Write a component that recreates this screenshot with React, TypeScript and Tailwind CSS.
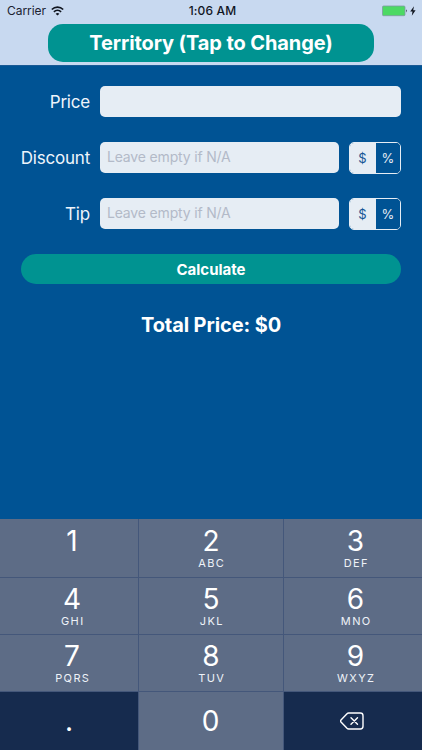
import React from 'react';

const KEYS = [
  { digit: '1', letters: '' },
  { digit: '2', letters: 'ABC' },
  { digit: '3', letters: 'DEF' },
  { digit: '4', letters: 'GHI' },
  { digit: '5', letters: 'JKL' },
  { digit: '6', letters: 'MNO' },
  { digit: '7', letters: 'PQRS' },
  { digit: '8', letters: 'TUV' },
  { digit: '9', letters: 'WXYZ' },
];

const COLUMN_SHIFT = ['pl-[6px]', 'pl-0', 'pl-[5px]'];
const ROW_TOP = ['pt-[8px]', 'pt-[7px]', 'pt-[7px]'];

function StatusBar() {
  return (
    <div className="grid h-[22px] grid-cols-3 items-center pl-[7px] pr-[5px] text-[12px] leading-none text-[#1b2230]">
      <div className="flex items-center gap-[5px]">
        <span className="w-[39px] whitespace-nowrap tracking-[-0.05px]">Carrier</span>
        <svg width="13" height="10" viewBox="0 0 13 10" fill="none" stroke="#10151f" strokeWidth="1.7">
          <path d="M0.8 3.5C4 .4 9 .4 12.2 3.5" />
          <path d="M2.9 5.8C5 3.8 8 3.8 10.1 5.8" />
          <path d="M6.5 9.6L4.6 7.7Q6.5 6.1 8.4 7.7Z" fill="#10151f" stroke="none" />
        </svg>
      </div>
      <div className="pl-px text-center font-medium tracking-[0.15px] text-[#10151f]">1:06 AM</div>
      <div className="flex items-center justify-end">
        <svg width="35" height="12" viewBox="0 0 35 12">
          <rect x="0.5" y="1" width="22.5" height="9.7" rx="1" fill="#4cd964" stroke="#7f9aa2" strokeWidth="0.8" />
          <path d="M24 4.2Q25.5 5.8 24 7.5Z" fill="#10151f" />
          <path d="M32 1.2L28.2 6.6H30.5L29.8 10.7L33.6 5.2H31.2Z" fill="#10151f" />
        </svg>
      </div>
    </div>
  );
}

function UnitToggle() {
  return (
    <div className="ml-[10px] grid h-8 w-[52px] shrink-0 grid-cols-[26px_1fr] overflow-hidden rounded-[5px] border border-[#e6edf4] text-[13px] leading-none">
      <button className="flex items-center justify-center bg-[#e6edf4] pr-px text-[#145694]">$</button>
      <button className="flex items-center justify-center bg-[#005394] text-[#e6edf4]">%</button>
    </div>
  );
}

function Field({ label, placeholder, toggle }: { label: string; placeholder?: string; toggle?: boolean }) {
  return (
    <div className="flex h-8 items-start">
      <label className="w-[90px] shrink-0 text-right text-[17px] leading-[32px] tracking-[-0.2px] text-[#eef5fc]">{label}</label>
      <input
        className="ml-[10px] h-[31px] min-w-0 flex-1 rounded-[5px] bg-[#e6edf4] px-[7px] pb-[2px] text-[14px] tracking-[-0.17px] placeholder:text-[#b3bac8] placeholder:opacity-100"
        placeholder={placeholder}
      />
      {toggle && <UnitToggle />}
    </div>
  );
}

function Keypad() {
  return (
    <div className="grid h-[231px] grid-cols-[138px_144px_138px] grid-rows-[58px_56px_56px_58px] gap-px bg-[#44577a] text-white">
      {KEYS.map((key, i) => (
        <button
          key={key.digit}
          className={`flex flex-col items-center bg-[#5d6c86] ${ROW_TOP[Math.floor(i / 3)]} ${COLUMN_SHIFT[i % 3]}`}
        >
          <span className="text-[28px] leading-[28px]">{key.digit}</span>
          <span className="mt-[2px] pl-[1.5px] text-[11px] leading-[12px] tracking-[1.4px] text-[#eef2f8]">{key.letters}</span>
        </button>
      ))}
      <button className="flex items-center justify-center bg-[#162b4e] text-[28px] leading-none">.</button>
      <button className="flex items-center justify-center bg-[#5d6c86] pr-px text-[28px] leading-none">0</button>
      <button className="flex items-center justify-center bg-[#162b4e] pr-[2px]">
        <svg width="24" height="18" viewBox="0 0 24 18" fill="none" stroke="white" strokeWidth="1.4" strokeLinejoin="round" strokeLinecap="round">
          <path d="M8.6 1H20.3Q23 1 23 3.7V14.3Q23 17 20.3 17H8.6Q7.7 17 7 16.3L1 10Q0.2 9 1 8L7 1.7Q7.7 1 8.6 1Z" />
          <path d="M11 5.7L17.5 12.3M17.5 5.7L11 12.3" />
        </svg>
      </button>
    </div>
  );
}

export default function App() {
  return (
    <div className="flex h-[750px] w-[422px] flex-col overflow-hidden bg-[#005394] font-['Inter',sans-serif]">
      <header className="h-[66px] shrink-0 border-b border-[#1a5a95] bg-[#c8d9f0]">
        <StatusBar />
        <button className="mx-auto mt-[2px] flex h-[38px] w-[326px] items-center justify-center rounded-[15px] bg-[#009391] text-[20px] font-bold leading-none tracking-[-0.1px] text-white">
          Territory (Tap to Change)
        </button>
      </header>
      <main className="flex flex-1 flex-col pr-[21px] pt-[20px]">
        <div className="flex flex-col gap-6">
          <Field label="Price" />
          <Field label="Discount" placeholder="Leave empty if N/A" toggle />
          <Field label="Tip" placeholder="Leave empty if N/A" toggle />
        </div>
        <button className="ml-[21px] mt-[24px] h-[30px] rounded-full bg-[#009391] text-[15px] font-bold leading-none text-white">
          Calculate
        </button>
        <div className="ml-[21px] mt-[29px] text-center text-[20px] font-bold leading-6 tracking-[-0.1px] text-white">Total Price: $0</div>
      </main>
      <Keypad />
    </div>
  );
}
